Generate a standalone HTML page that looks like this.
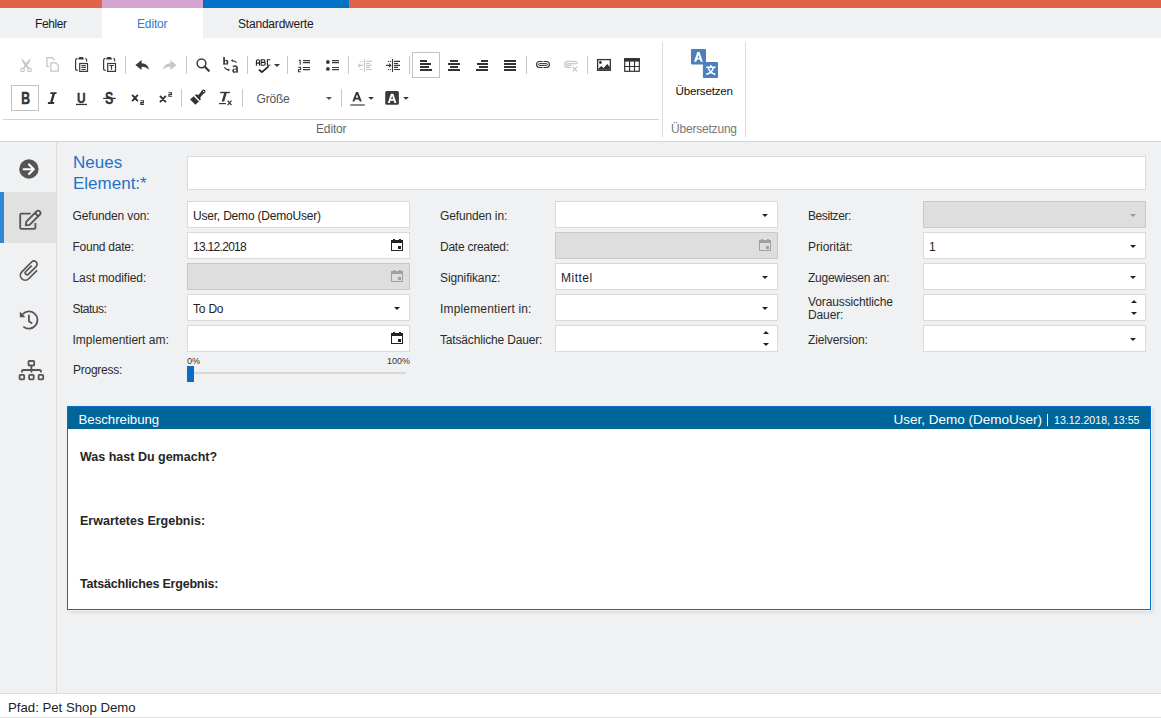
<!DOCTYPE html>
<html><head><meta charset="utf-8">
<style>
*{box-sizing:border-box;margin:0;padding:0}
html,body{width:1161px;height:718px;overflow:hidden}
body{position:relative;background:#f0f1f3;font-family:"Liberation Sans",sans-serif;color:#262626}
.a{position:absolute}
.t{position:absolute;white-space:nowrap;line-height:1}
.sep{position:absolute;width:1px;background:#c9c9c9}
.ic{position:absolute}
.lbl{position:absolute;white-space:nowrap;font-size:12px;letter-spacing:-0.25px;color:#2b2b2b;line-height:1}
.inp{position:absolute;height:27px;width:223px;background:#fff;border:1px solid #dadada}
.inp.dis{background:#dedede;border-color:#c8c8c8}
.val{position:absolute;font-size:12px;letter-spacing:-0.2px;color:#222;white-space:nowrap;line-height:1}
.dd{position:absolute;right:9px;top:11px;width:0;height:0;border-left:3.5px solid transparent;border-right:3.5px solid transparent;border-top:4px solid #222}
</style></head><body>

<!-- colour strip -->
<div class="a" style="left:0;top:0;width:1161px;height:8px;background:#e0634b"></div>
<div class="a" style="left:102px;top:0;width:101px;height:8px;background:#d5a5d2"></div>
<div class="a" style="left:203px;top:0;width:146px;height:8px;background:#0072c6"></div>

<!-- tabs -->
<div class="a" style="left:102px;top:8px;width:101px;height:30px;background:#fff"></div>
<div class="t" style="left:35px;top:18px;font-size:12px;letter-spacing:-0.4px;color:#1a1a1a">Fehler</div>
<div class="t" style="left:137px;top:18px;font-size:12px;letter-spacing:-0.15px;color:#2b7cd3">Editor</div>
<div class="t" style="left:238px;top:18px;font-size:12px;letter-spacing:-0.2px;color:#1a1a1a">Standardwerte</div>

<!-- ribbon -->
<div class="a" style="left:0;top:38px;width:1161px;height:103px;background:#fff"></div>
<div class="a" style="left:0;top:141px;width:1161px;height:1px;background:#d6d6d6"></div>
<div class="a" style="left:3px;top:119px;width:656px;height:1px;background:#d3d3d3"></div>
<div class="sep" style="left:662px;top:42px;height:95px;background:#dcdcdc"></div>
<div class="sep" style="left:745px;top:42px;height:95px;background:#dcdcdc"></div>
<div class="t" style="left:316px;top:122.5px;font-size:12px;letter-spacing:-0.15px;color:#666">Editor</div>
<div class="t" style="left:671px;top:122.5px;font-size:12px;letter-spacing:-0.2px;color:#777">Übersetzung</div>

<svg class="a" style="left:0;top:0" width="760" height="141" viewBox="0 0 760 141">
<g fill="none" stroke="#c6c6c6" stroke-width="1">
<!-- separators -->
<path d="M125.5 56V74 M186.5 56V74 M247.5 56V74 M287.5 56V74 M348.5 56V74 M409.5 56V74 M526.5 56V74 M587.5 56V74 M181.5 89V107 M242.5 89V107 M341.5 89V107"/>
<!-- toggled button boxes -->
<rect x="412.5" y="52.5" width="27" height="25" stroke="#c2c2c2"/>
<rect x="11.5" y="85.5" width="27" height="25" stroke="#c2c2c2"/>
</g>
<!-- scissors (disabled) -->
<g fill="#c6c6c6">
<path d="M21.2 58L24.6 61.4L28.4 66.3L26.6 67.6L22.6 62.3Z"/>
<path d="M30.8 58L27.4 61.4L23.6 66.3L25.4 67.6L29.4 62.3Z"/>
</g>
<g fill="none" stroke="#c6c6c6" stroke-width="1.3">
<path d="M25.2 66.6L23.4 68.4 M26.8 66.6L28.6 68.4"/>
<circle cx="22.5" cy="69.9" r="1.75"/>
<circle cx="29.5" cy="69.9" r="1.75"/>
</g>
<!-- copy (disabled) -->
<g fill="none" stroke="#c4c4c4" stroke-width="1.2">
<path d="M49 66.4H46.9V57.7H52.3L54.4 60"/>
<path d="M50.8 62.8H55.8L58.3 65.4V71.2H50.8Z"/>
</g>
<!-- paste -->
<g fill="none" stroke="#3a3a3a" stroke-width="1.2">
<path d="M77.5 58.3C76 58.5 75.6 59.3 75.6 60.3V68.8C75.6 70 76.3 70.4 77.8 70.4"/>
<path d="M85.4 58.3C86.2 58.5 86.6 59.2 86.6 60V61.6"/>
<rect x="79.7" y="63.5" width="7.8" height="7.9"/>
<path d="M81.4 65.6H85.8 M81.4 67.5H85.8 M81.4 69.5H85.8"/>
</g>
<path d="M79.4 57H82.8L83.8 58.5V59.6H78.3V58.5Z" fill="#3a3a3a"/>
<!-- paste text -->
<g fill="none" stroke="#3a3a3a" stroke-width="1.2">
<path d="M105.5 58.3C104 58.5 103.6 59.3 103.6 60.3V68.8C103.6 70 104.3 70.4 105.8 70.4"/>
<path d="M113.4 58.3C114.2 58.5 114.6 59.2 114.6 60V61.6"/>
<rect x="107.7" y="63.5" width="7.8" height="7.9"/>
<path d="M109.2 65.5H113.8 M111.5 65.5V69.7"/>
</g>
<path d="M107.4 57H110.8L111.8 58.5V59.6H106.3V58.5Z" fill="#3a3a3a"/>
<!-- undo -->
<path d="M135.4 65L141.6 60V63.2C145.6 63.3 148.6 65.5 148.9 69.8C147.3 67.6 145 66.7 141.6 66.7V69.9Z" fill="#3a3a3a"/>
<!-- redo disabled -->
<path d="M176.6 65L170.4 60V63.2C166.4 63.3 163.4 65.5 163.1 69.8C164.7 67.6 167 66.7 170.4 66.7V69.9Z" fill="#c8c8c8"/>
<!-- search -->
<g fill="none" stroke="#3a3a3a">
<circle cx="201.5" cy="63.3" r="4.4" stroke-width="1.5"/>
<path d="M204.8 66.7L208.8 70.8" stroke-width="2.3" stroke-linecap="round"/>
</g>
<!-- replace b/a -->
<g fill="#3a3a3a">
<path d="M223.2 57.1H224.9V60.4C225.3 59.9 225.9 59.7 226.5 59.7C227.8 59.7 228.4 60.7 228.4 62.2C228.4 63.8 227.7 64.8 226.3 64.8C225.6 64.8 225.2 64.5 224.9 64.1V64.7H223.2Z M224.9 62.3C224.9 63.1 225.2 63.5 225.8 63.5C226.4 63.5 226.7 63 226.7 62.2C226.7 61.4 226.4 61 225.8 61C225.2 61 224.9 61.5 224.9 62.3Z" fill-rule="evenodd"/>
<path d="M232.5 66.3C233.2 65.6 234.1 65.3 235.1 65.3C236.9 65.3 237.9 66.2 237.9 68V72.8H236.3V72.1C235.9 72.6 235.2 72.9 234.5 72.9C233.1 72.9 232.3 72.1 232.3 70.7C232.3 69.2 233.3 68.5 235.2 68.4L236.3 68.3V68C236.3 67.1 235.8 66.7 235 66.7C234.3 66.7 233.8 67 233.3 67.4Z M236.3 69.5L235.4 69.6C234.4 69.7 233.9 70 233.9 70.6C233.9 71.2 234.3 71.5 234.9 71.5C235.7 71.5 236.3 71 236.3 70.2Z" fill-rule="evenodd"/>
</g>
<g fill="none" stroke="#3a3a3a" stroke-width="1.1">
<path d="M236.6 62.6C235.6 61.3 234.3 60.7 232.3 60.6 M224.3 67.3C225.1 68.8 226.5 69.7 228.6 69.8"/>
</g>
<path d="M230.8 60.6L232.9 59.2V62Z M230.2 69.9L228 68.5V71.3Z" fill="#3a3a3a"/>
<!-- spellcheck ABC -->
<g fill="none" stroke="#1e1e1e" stroke-width="1.1">
<path d="M256.4 65.8V61.5C256.4 60 257 59.7 258 59.7C259 59.7 259.5 60 259.5 61.5V65.8 M256.4 63.1H259.5"/>
<path d="M261.2 65.3V59.7H263.8C264.6 59.7 265 60.2 265 61.1C265 61.9 264.6 62.4 263.8 62.4H261.2 M263.8 62.4C264.8 62.4 265.3 63 265.3 63.8C265.3 64.8 264.8 65.3 263.8 65.3H261.2"/>
<path d="M270.3 59.7H267.4V65.3H270.3"/>
</g>
<path d="M258.9 69.6L261.9 72.2L268.6 66.3" fill="none" stroke="#1e1e1e" stroke-width="1.7"/>
<path d="M274 64.1H280L277 66.9Z" fill="#3a3a3a"/>
<!-- numbered list -->
<g fill="none" stroke="#3a3a3a" stroke-width="1.1">
<path d="M298.9 60.4H300.2V64.8"/>
<path d="M298.2 67.3H300.6V69.5H298.5V71.7H300.9"/>
<path d="M303 60.6H310 M303 62.6H310 M303 67.5H310 M303 69.6H310"/>
</g>
<!-- bullet list -->
<circle cx="327.9" cy="62" r="1.9" fill="#3a3a3a"/>
<circle cx="327.9" cy="68.9" r="1.9" fill="#3a3a3a"/>
<path d="M332 60.6H339 M332 62.6H339 M332 67.5H339 M332 69.6H339" fill="none" stroke="#3a3a3a" stroke-width="1.1"/>
<!-- outdent disabled -->
<g fill="none" stroke="#c8c8c8" stroke-width="1.1">
<path d="M364.5 59V72 M366 61.4H372 M366 63.5H370 M366 65.4H372 M366 67.4H370 M366 69.5H372 M359 65.4H363"/>
<path d="M360.2 63.6L358.4 65.4L360.2 67.2"/>
</g>
<g fill="#c8c8c8"><rect x="359.9" y="60.9" width="1" height="1"/><rect x="362" y="60.9" width="1" height="1"/><rect x="359.9" y="69" width="1" height="1"/><rect x="362" y="69" width="1" height="1"/></g>
<!-- indent -->
<g fill="none" stroke="#3a3a3a" stroke-width="1.1">
<path d="M392.5 59V72 M394 61.4H400 M394 63.5H398 M394 65.4H400 M394 67.4H398 M394 69.5H400 M386 65.4H390"/>
<path d="M389 63.6L390.8 65.4L389 67.2"/>
</g>
<g fill="#3a3a3a"><rect x="387.8" y="60.9" width="1.1" height="1.1"/><rect x="389.9" y="60.9" width="1.1" height="1.1"/><rect x="387.8" y="69" width="1.1" height="1.1"/><rect x="389.9" y="69" width="1.1" height="1.1"/></g>
<!-- align -->
<g fill="#333">
<rect x="420" y="60" width="7" height="2"/><rect x="420" y="63" width="11" height="2"/><rect x="420" y="66" width="9" height="2"/><rect x="420" y="69" width="12" height="2"/>
<rect x="450" y="60" width="8" height="2"/><rect x="448" y="63" width="12" height="2"/><rect x="450" y="66" width="8" height="2"/><rect x="448" y="69" width="12" height="2"/>
<rect x="481" y="60" width="7" height="2"/><rect x="477" y="63" width="11" height="2"/><rect x="479" y="66" width="9" height="2"/><rect x="476" y="69" width="12" height="2"/>
<rect x="504" y="60" width="12" height="2"/><rect x="504" y="63" width="12" height="2"/><rect x="504" y="66" width="12" height="2"/><rect x="504" y="69" width="12" height="2"/>
</g>
<!-- link -->
<g fill="none" stroke="#333" stroke-width="1.15">
<rect x="536.6" y="61.5" width="12.8" height="6" rx="3"/>
<rect x="538.6" y="63.6" width="8.8" height="1.8" rx="0.9" stroke-width="1"/>
</g>
<path d="M543 61V62 M543 67V68" stroke="#fff" stroke-width="1"/>
<!-- unlink disabled -->
<g fill="none" stroke="#c8c8c8" stroke-width="1.2">
<path d="M571 67.4H567.6C565.8 67.4 564.6 66.2 564.6 64.4C564.6 62.6 565.8 61.4 567.6 61.4H574.4C576.2 61.4 577.4 62.6 577.4 64.3"/>
<path d="M571.5 65.3H567.6C567 65.3 566.7 64.9 566.7 64.4C566.7 63.9 567 63.6 567.6 63.6H574.4C574.9 63.6 575.3 63.9 575.3 64.4"/>
<path d="M572.6 66.8L577 71.4 M577 66.8L572.6 71.4" stroke-width="1.3"/>
</g>
<!-- image -->
<rect x="597.6" y="59.6" width="12.7" height="10.7" fill="none" stroke="#333" stroke-width="1.3"/>
<circle cx="600.4" cy="62.5" r="1.4" fill="#333"/>
<path d="M598.2 69.7V68.8L601.3 65.9L603.6 68L607.2 64L609.8 67.1V69.7Z" fill="#333"/>
<!-- table -->
<g fill="none" stroke="#333" stroke-width="1.2">
<rect x="624.7" y="58.7" width="14.6" height="12.6"/>
<path d="M629.6 61V71.3 M634.5 61V71.3 M624.8 66.5H639.2"/>
</g>
<rect x="624.1" y="58.1" width="15.8" height="3.5" fill="#333"/>

<!-- ROW 2 -->
<text x="21.2" y="103.6" font-family="Liberation Sans" font-weight="bold" font-size="16" fill="#333" stroke="#333" stroke-width="0.5" textLength="8.8" lengthAdjust="spacingAndGlyphs">B</text>
<g fill="#333"><path d="M50.6 92.2H56.8L56.3 94H50.1Z M48.2 102.1H54.4L53.9 103.9H47.7Z M52.6 93.5H55.1L52.5 102.6H50Z"/></g>
<text x="77" y="102.6" font-family="Liberation Sans" font-weight="bold" font-size="14.5" fill="#333" stroke="#333" stroke-width="0.35" textLength="8.6" lengthAdjust="spacingAndGlyphs">U</text>
<rect x="76" y="103.8" width="11" height="1.3" fill="#333"/>
<text x="105" y="103.7" font-family="Liberation Sans" font-weight="bold" font-size="16" fill="#333" stroke="#333" stroke-width="0.3" textLength="8.4" lengthAdjust="spacingAndGlyphs">S</text>
<rect x="103.2" y="97.8" width="12.6" height="1.2" fill="#333"/>
<!-- sub/superscript -->
<g fill="none" stroke="#333" stroke-width="1.9" stroke-linecap="round">
<path d="M132.6 95.4L137.4 100.6 M137.4 95.4L132.6 100.6"/>
<path d="M160.4 96.4L165.4 101.6 M165.4 96.4L160.4 101.6"/>
</g>
<g fill="none" stroke="#333" stroke-width="1.1">
<path d="M140.3 100.8H143.4V102.6H140.8V104.4H143.9"/>
<path d="M168.4 92.7H171.5V94.5H168.9V96.3H172"/>
</g>
<!-- brush -->
<path d="M190.1 99.4L193.6 96.2L198.9 101.4L195.4 104.8Z" fill="#333"/>
<path d="M194.9 95.3L196 94.2L198.8 95.3L200 96.5L200.8 99.5L199.8 100.4Z" fill="#333"/>
<path d="M199 96.6L203.2 91.8" stroke="#333" stroke-width="3" stroke-linecap="round"/>
<circle cx="203.5" cy="91.5" r="2" fill="#333"/>
<circle cx="203.6" cy="91.4" r="0.75" fill="#fff"/>
<!-- clear formatting -->
<g fill="#333">
<rect x="220.2" y="91.8" width="9.6" height="1.4"/>
<path d="M224.2 93.1H226.7L224.2 101.6H221.7Z"/>
<rect x="219.1" y="103" width="6.8" height="1.2"/>
</g>
<path d="M227.6 100.6L231.5 105.2 M231.5 100.6L227.6 105.2" stroke="#333" stroke-width="1.2" fill="none"/>
<!-- Groesse dropdown arrow -->
<path d="M326 97H332L329 99.9Z" fill="#555"/>
<!-- font colour A -->
<path d="M352.4 101.6L356 92H358.1L361.8 101.6H359.7L358.9 99.4H355.2L354.4 101.6Z M355.8 97.8H358.3L357.05 94.3Z" fill="#333" fill-rule="evenodd"/>
<rect x="350.3" y="104" width="14.5" height="2" fill="#8a8a8a"/>
<path d="M368.2 97.1H374L371.1 99.8Z" fill="#333"/>
<!-- bg colour A -->
<rect x="385.2" y="91.1" width="13.7" height="13.7" rx="1.6" fill="#3a3a3a"/>
<path d="M387.8 103L390.9 93.7H393.3L396.5 103H394.4L393.7 100.8H390.5L389.8 103Z M391.1 99.1H393.1L392.1 95.9Z" fill="#fff" fill-rule="evenodd"/>
<path d="M403.1 97.1H408.9L406 99.8Z" fill="#333"/>
<!-- translate -->
<g fill="#4a80be">
<rect x="691" y="49" width="15" height="15.6" rx="1"/>
<rect x="702.9" y="62" width="15.1" height="15.9" rx="1"/>
</g>
<path d="M694 61.7L697.3 52H699.6L702.8 61.7H700.6L699.9 59.6H697L696.3 61.7Z M697.5 57.9H699.4L698.45 54.9Z" fill="#fff" fill-rule="evenodd"/>
<g fill="none" stroke="#fff" stroke-width="1.6">
<path d="M706.2 67.2H715.5 M710.8 65V67.2 M708.3 67.6C709.2 71 711.6 73.5 715.3 74.4 M713.4 67.6C712.5 71 710 73.5 706.3 74.4"/>
</g>
<text x="675.5" y="94.5" font-family="Liberation Sans" font-size="11.6" fill="#111" letter-spacing="-0.2">Übersetzen</text>
<text x="256.5" y="103" font-family="Liberation Sans" font-size="12" fill="#555" letter-spacing="-0.2">Größe</text>
</svg>


<!-- sidebar -->
<div class="a" style="left:56px;top:142px;width:1px;height:551px;background:#dcdcdc"></div>
<div class="a" style="left:0;top:192px;width:56px;height:51px;background:#e1e1e1"></div>
<div class="a" style="left:0;top:192px;width:4px;height:51px;background:#2b88d8"></div>
<svg class="a" style="left:0;top:142px" width="56" height="250" viewBox="0 142 56 250">
<circle cx="28.9" cy="169" r="9.7" fill="#555"/>
<g fill="none" stroke="#fff" stroke-width="2.1" stroke-linecap="round" stroke-linejoin="round">
<path d="M23.6 169.2H33.6 M29 164.4L33.8 169.2L29 174"/>
</g>
<g fill="none" stroke="#555" stroke-width="1.8" stroke-linejoin="round">
<path d="M30.6 213.6H21.4C20.7 213.6 20.2 214.1 20.2 214.8V227.7C20.2 228.4 20.7 228.9 21.4 228.9H34.2C34.9 228.9 35.4 228.4 35.4 227.7V223"/>
<g transform="translate(26.4,224.8) rotate(45)">
<path d="M-2.3 -16.5C-2.3 -18 -1.3 -19 0 -19C1.3 -19 2.3 -18 2.3 -16.5V-2.2L0 0.9L-2.3 -2.2Z"/>
<path d="M-2.3 -14.4H2.3"/>
</g>
</g>
<g transform="translate(29,270) rotate(45)" fill="none" stroke="#555" stroke-width="1.7" stroke-linecap="butt">
<path d="M-1.2 -5.1V3.3A1.9 1.9 0 0 0 2.6 3.3V-7.5A3.2 3.2 0 0 0 -3.8 -7.5V6.4A4.9 4.9 0 0 0 6.0 6.4V-5.4"/>
</g>
<g fill="none" stroke="#555" stroke-width="1.8" stroke-linecap="butt">
<path d="M23.3 326.6A8.6 8.6 0 1 0 22.5 314.3"/>
<path d="M28.9 314.7V321.2L32.2 323.4"/>
</g>
<path d="M19.8 311.6L25.4 317.2H19.8Z" fill="#555"/>
<g fill="none" stroke="#555" stroke-width="1.8">
<rect x="28.5" y="361" width="5.7" height="4.5" rx="0.8"/>
<path d="M31.4 365.8V369.6 M21.9 372.6V371.4C21.9 370.5 22.4 370 23.3 370H39.6C40.5 370 41 370.5 41 371.4V372.6 M31.4 369.8V372.6"/>
<rect x="19.6" y="374.9" width="4.6" height="4.5" rx="0.8"/>
<rect x="29.1" y="374.9" width="4.6" height="4.5" rx="0.8"/>
<rect x="38.6" y="374.9" width="4.6" height="4.5" rx="0.8"/>
</g>
</svg>


<div class="lbl" style="left:72.5px;top:210px;letter-spacing:-0.133px">Gefunden von:</div>
<div class="inp" style="left:187px;top:201px"></div>
<div class="val" style="left:193px;top:210px;letter-spacing:-0.2px">User, Demo (DemoUser)</div>
<div class="lbl" style="left:72.5px;top:241px;letter-spacing:-0.250px">Found date:</div>
<div class="inp" style="left:187px;top:232px"></div>
<div class="val" style="left:193px;top:241px;letter-spacing:-0.7px">13.12.2018</div>
<svg class="ic" style="left:391px;top:239px" width="12" height="12" viewBox="0 0 12 12"><g fill="#222"><rect x="2" y="0" width="2" height="1"/><rect x="8" y="0" width="2" height="1"/><path d="M0 1H12V12H0Z M1 4V11H11V4Z" fill-rule="evenodd"/><rect x="7" y="7" width="3" height="3"/></g></svg>
<div class="lbl" style="left:72.5px;top:272px;letter-spacing:-0.073px">Last modified:</div>
<div class="inp dis" style="left:187px;top:263px"></div>
<svg class="ic" style="left:391px;top:270px" width="12" height="12" viewBox="0 0 12 12"><g fill="#a0a0a0"><rect x="2" y="0" width="2" height="1"/><rect x="8" y="0" width="2" height="1"/><path d="M0 1H12V12H0Z M1 4V11H11V4Z" fill-rule="evenodd"/><rect x="7" y="7" width="3" height="3"/></g></svg>
<div class="lbl" style="left:72.5px;top:303px;letter-spacing:-0.517px">Status:</div>
<div class="inp" style="left:187px;top:294px"></div>
<div class="val" style="left:193px;top:303px;letter-spacing:-0.2px">To Do</div>
<div class="a" style="left:394px;top:307px;width:0;height:0;border-left:3px solid transparent;border-right:3px solid transparent;border-top:3.5px solid #222"></div>
<div class="lbl" style="left:72.5px;top:334px;letter-spacing:0.019px">Implementiert am:</div>
<div class="inp" style="left:187px;top:325px"></div>
<svg class="ic" style="left:391px;top:332px" width="12" height="12" viewBox="0 0 12 12"><g fill="#222"><rect x="2" y="0" width="2" height="1"/><rect x="8" y="0" width="2" height="1"/><path d="M0 1H12V12H0Z M1 4V11H11V4Z" fill-rule="evenodd"/><rect x="7" y="7" width="3" height="3"/></g></svg>
<div class="lbl" style="left:440px;top:210px;letter-spacing:-0.132px">Gefunden in:</div>
<div class="inp" style="left:555px;top:201px"></div>
<div class="a" style="left:762px;top:214px;width:0;height:0;border-left:3px solid transparent;border-right:3px solid transparent;border-top:3.5px solid #222"></div>
<div class="lbl" style="left:440px;top:241px;letter-spacing:-0.250px">Date created:</div>
<div class="inp dis" style="left:555px;top:232px"></div>
<svg class="ic" style="left:759px;top:239px" width="12" height="12" viewBox="0 0 12 12"><g fill="#a0a0a0"><rect x="2" y="0" width="2" height="1"/><rect x="8" y="0" width="2" height="1"/><path d="M0 1H12V12H0Z M1 4V11H11V4Z" fill-rule="evenodd"/><rect x="7" y="7" width="3" height="3"/></g></svg>
<div class="lbl" style="left:440px;top:272px;letter-spacing:-0.105px">Signifikanz:</div>
<div class="inp" style="left:555px;top:263px"></div>
<div class="val" style="left:561px;top:272px;letter-spacing:0.5px">Mittel</div>
<div class="a" style="left:762px;top:276px;width:0;height:0;border-left:3px solid transparent;border-right:3px solid transparent;border-top:3.5px solid #222"></div>
<div class="lbl" style="left:440px;top:303px;letter-spacing:0.169px">Implementiert in:</div>
<div class="inp" style="left:555px;top:294px"></div>
<div class="a" style="left:762px;top:307px;width:0;height:0;border-left:3px solid transparent;border-right:3px solid transparent;border-top:3.5px solid #222"></div>
<div class="lbl" style="left:440px;top:334px;letter-spacing:-0.172px">Tatsächliche Dauer:</div>
<div class="inp" style="left:555px;top:325px"></div>
<div class="a" style="left:763px;top:331px;width:0;height:0;border-left:3px solid transparent;border-right:3px solid transparent;border-bottom:3.5px solid #222"></div>
<div class="a" style="left:763px;top:343px;width:0;height:0;border-left:3px solid transparent;border-right:3px solid transparent;border-top:3.5px solid #222"></div>
<div class="lbl" style="left:808px;top:210px;letter-spacing:-0.425px">Besitzer:</div>
<div class="inp dis" style="left:923px;top:201px"></div>
<div class="a" style="left:1130px;top:214px;width:0;height:0;border-left:3px solid transparent;border-right:3px solid transparent;border-top:3.5px solid #9a9a9a"></div>
<div class="lbl" style="left:808px;top:241px;letter-spacing:-0.006px">Priorität:</div>
<div class="inp" style="left:923px;top:232px"></div>
<div class="val" style="left:929px;top:241px;letter-spacing:-0.2px">1</div>
<div class="a" style="left:1130px;top:245px;width:0;height:0;border-left:3px solid transparent;border-right:3px solid transparent;border-top:3.5px solid #222"></div>
<div class="lbl" style="left:808px;top:272px;letter-spacing:-0.250px">Zugewiesen an:</div>
<div class="inp" style="left:923px;top:263px"></div>
<div class="a" style="left:1130px;top:276px;width:0;height:0;border-left:3px solid transparent;border-right:3px solid transparent;border-top:3.5px solid #222"></div>
<div class="lbl" style="left:808px;top:296px;line-height:13px;letter-spacing:-0.117px">Voraussichtliche<br>Dauer:</div>
<div class="inp" style="left:923px;top:294px"></div>
<div class="a" style="left:1131px;top:300px;width:0;height:0;border-left:3px solid transparent;border-right:3px solid transparent;border-bottom:3.5px solid #222"></div>
<div class="a" style="left:1131px;top:312px;width:0;height:0;border-left:3px solid transparent;border-right:3px solid transparent;border-top:3.5px solid #222"></div>
<div class="lbl" style="left:808px;top:334px;letter-spacing:-0.132px">Zielversion:</div>
<div class="inp" style="left:923px;top:325px"></div>
<div class="a" style="left:1130px;top:338px;width:0;height:0;border-left:3px solid transparent;border-right:3px solid transparent;border-top:3.5px solid #222"></div>
<div class="t" style="left:73px;top:152px;font-size:17px;line-height:21px;color:#1f72c8;white-space:normal;width:100px">Neues<br>Element:*</div>
<div class="inp" style="left:187px;top:156px;width:959px;height:34px"></div>
<div class="lbl" style="left:73px;top:364px">Progress:</div>
<div class="t" style="left:187px;top:357px;font-size:9px;color:#333">0%</div>
<div class="t" style="left:387px;top:357px;font-size:9px;color:#333">100%</div>
<div class="a" style="left:194px;top:372px;width:212px;height:2px;background:#d8d8d8"></div>
<div class="a" style="left:187px;top:366px;width:7px;height:16px;background:#0a6cc4"></div>

<div class="a" style="left:68px;top:407px;width:1084px;height:204px;box-shadow:1px 1px 4px rgba(0,0,0,.12)"></div>
<div class="a" style="left:67px;top:406px;width:1084px;height:204px;background:#fff;border:1px solid #0a6fc2"></div>
<div class="a" style="left:68px;top:407px;width:1082px;height:22px;background:#00669a"></div>
<div class="t" style="left:78.5px;top:412.5px;font-size:13.2px;color:#fff">Beschreibung</div>
<div class="t" style="left:893.5px;top:412.5px;font-size:13.5px;color:#fff">User, Demo (DemoUser)</div>
<div class="a" style="left:1047px;top:414px;width:1px;height:12px;background:#fff"></div>
<div class="t" style="left:1054px;top:415px;font-size:10.6px;color:#fff">13.12.2018, 13:55</div>
<div class="t" style="left:80px;top:451px;font-size:12.5px;letter-spacing:0;font-weight:bold;color:#262626">Was hast Du gemacht?</div>
<div class="t" style="left:80px;top:515px;font-size:12.5px;letter-spacing:0;font-weight:bold;color:#262626">Erwartetes Ergebnis:</div>
<div class="t" style="left:80px;top:578px;font-size:12.5px;letter-spacing:-0.2px;font-weight:bold;color:#262626">Tatsächliches Ergebnis:</div>

<!-- status bar -->
<div class="a" style="left:0;top:693px;width:1161px;height:1px;background:#dcdcdc"></div>
<div class="a" style="left:0;top:694px;width:1161px;height:23px;background:#fff"></div>
<div class="a" style="left:0;top:717px;width:1161px;height:1px;background:#dcdcdc"></div>
<div class="t" style="left:8px;top:701px;font-size:13.2px;color:#222">Pfad: Pet Shop Demo</div>
</body></html>
